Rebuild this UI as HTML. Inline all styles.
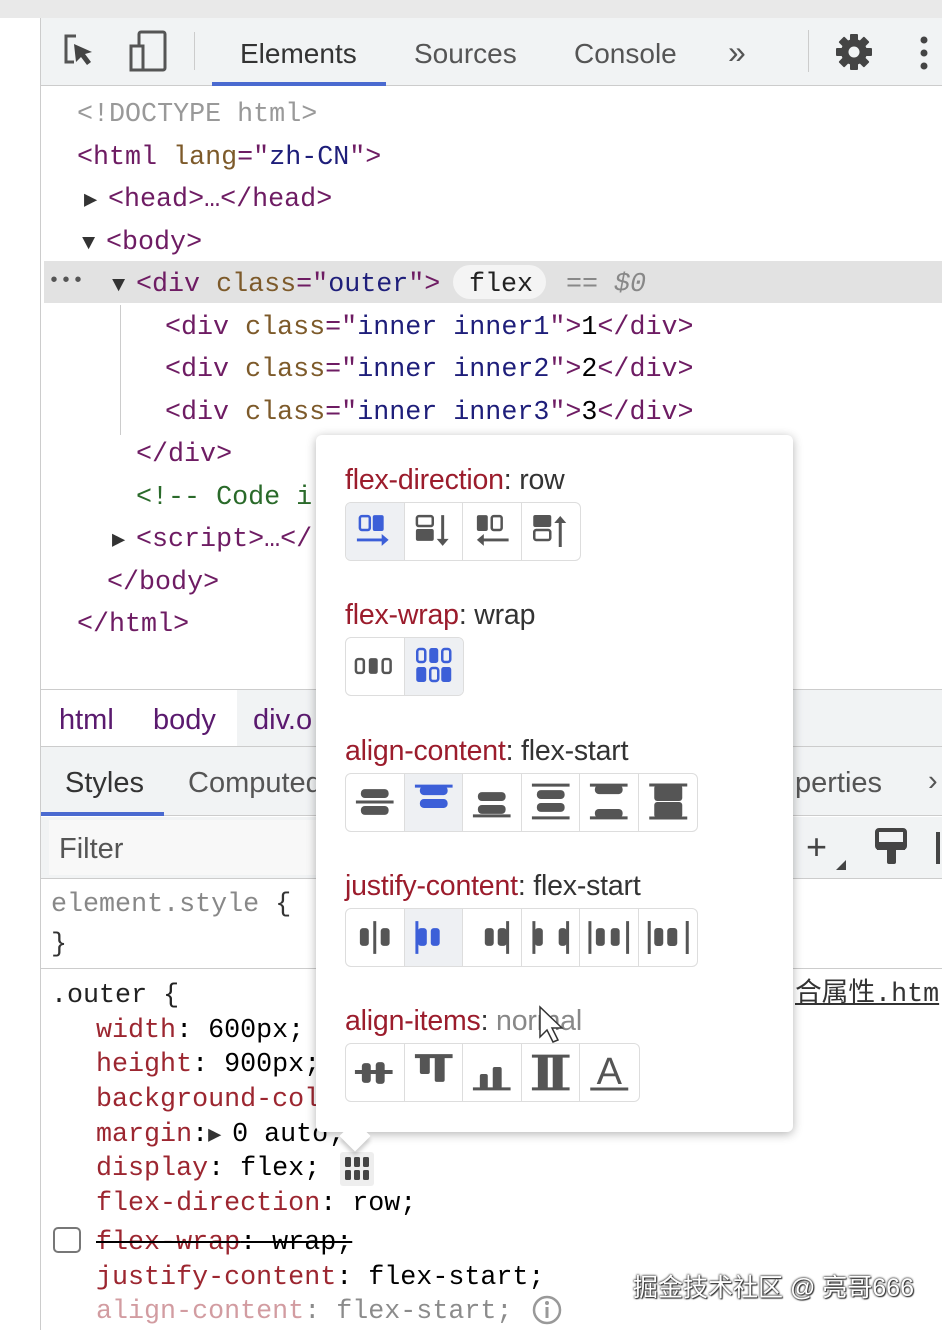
<!DOCTYPE html>
<html><head><meta charset="utf-8"><style>
*{margin:0;padding:0;box-sizing:border-box}
body{width:942px;height:1330px;position:relative;background:#fff;overflow:hidden;font-family:"Liberation Sans",sans-serif}
.a{position:absolute}
.m{font-family:"Liberation Mono","DejaVu Sans Mono",monospace;font-size:26.7px;white-space:pre;line-height:1}
.t{color:#6e1c63}.n{color:#7d5a2a}.v{color:#1e1e7a}
.p{color:#9c2630}
.tr{font-size:22px;color:#333;display:inline-block;width:24px}
.pop{position:absolute;left:316px;top:435px;width:477px;height:697px;background:#fff;border-radius:6px;box-shadow:0 2px 10px rgba(0,0,0,.3)}
.h{position:absolute;left:29px;font-size:28.5px;color:#333;white-space:nowrap;letter-spacing:-.2px}
.h b{font-weight:normal;color:#9b1c2c}
.g{position:absolute;left:29px;display:flex;border:1px solid #ddd;border-radius:6px;overflow:hidden;height:59px}
.g svg{width:58.5px;height:57px;border-right:1px solid #ddd;display:block}
.g svg:last-child{border-right:none}
.g svg.s{background:#eef0f3}
</style></head><body>
<div class="a" style="left:0;top:0;width:942px;height:18px;background:#e9e9e9"></div>
<div class="a" style="left:40px;top:18px;width:1px;height:1312px;background:#ccc"></div>
<!-- toolbar -->
<div class="a" style="left:41px;top:18px;width:901px;height:68px;background:#f1f3f4;border-bottom:1px solid #ccc"></div>
<svg class="a" style="left:62px;top:34px" width="40" height="36" viewBox="0 0 40 36"><path d="M14 2H4v26h8" fill="none" stroke="#555" stroke-width="3"/><path d="M12 10l18 8-7 2 6 8-4 3-6-8-5 5z" fill="#444"/></svg>
<svg class="a" style="left:128px;top:30px" width="40" height="42" viewBox="0 0 40 42"><rect x="11" y="2" width="26" height="38" rx="2" fill="none" stroke="#555" stroke-width="3"/><rect x="3" y="16" width="12" height="24" fill="#f1f3f4" stroke="#555" stroke-width="3"/></svg>
<div class="a" style="left:194px;top:32px;width:1px;height:38px;background:#ccc"></div>
<div class="a" style="left:240px;top:38px;font-size:28px;color:#333">Elements</div>
<div class="a" style="left:212px;top:82px;width:174px;height:4px;background:#4a6ad0"></div>
<div class="a" style="left:414px;top:38px;font-size:28px;color:#555">Sources</div>
<div class="a" style="left:574px;top:38px;font-size:28px;color:#555">Console</div>
<div class="a" style="left:728px;top:34px;font-size:32px;color:#555">»</div>
<div class="a" style="left:808px;top:30px;width:1px;height:42px;background:#ccc"></div>
<svg class="a" style="left:835px;top:33px" width="38" height="38" viewBox="0 0 38 38"><g fill="#444"><circle cx="19" cy="19" r="13"/><g id="k"><rect x="15" y="1" width="8" height="36" rx="1"/></g><rect x="15" y="1" width="8" height="36" rx="1" transform="rotate(45 19 19)"/><rect x="15" y="1" width="8" height="36" rx="1" transform="rotate(90 19 19)"/><rect x="15" y="1" width="8" height="36" rx="1" transform="rotate(135 19 19)"/></g><circle cx="19" cy="19" r="5.5" fill="#f1f3f4"/></svg>
<svg class="a" style="left:918px;top:36px" width="12" height="34"><circle cx="6" cy="4" r="3.5" fill="#444"/><circle cx="6" cy="17" r="3.5" fill="#444"/><circle cx="6" cy="30" r="3.5" fill="#444"/></svg>
<!-- DOM tree -->
<div class="a" style="left:44px;top:261px;width:898px;height:42px;background:#e2e2e2"></div>
<div class="a" style="left:120px;top:305px;width:1px;height:130px;background:#ccc"></div>
<div class="a m" style="left:77px;top:102px;color:#999">&lt;!DOCTYPE html&gt;</div>
<div class="a m" style="left:77px;top:145px"><span class="t">&lt;html </span><span class="n">lang</span><span class="t">="</span><span class="v">zh-CN</span><span class="t">"&gt;</span></div>
<div class="a m" style="left:84px;top:187px"><span class="tr">▶</span><span class="t">&lt;head&gt;…&lt;/head&gt;</span></div>
<div class="a m" style="left:82px;top:230px"><span class="tr">▼</span><span class="t">&lt;body&gt;</span></div>
<div class="a m" style="left:48px;top:272px;color:#555;font-size:20px">•••</div>
<div class="a m" style="left:112px;top:272px"><span class="tr">▼</span><span class="t">&lt;div </span><span class="n">class</span><span class="t">="</span><span class="v">outer</span><span class="t">"&gt;</span></div>
<div class="a" style="left:453px;top:265px;width:93px;height:34px;border-radius:17px;background:#f4f4f4"></div>
<div class="a m" style="left:469px;top:272px;color:#222">flex</div>
<div class="a m" style="left:566px;top:272px;color:#888">== <i>$0</i></div>
<div class="a m" style="left:165px;top:315px"><span class="t">&lt;div </span><span class="n">class</span><span class="t">="</span><span class="v">inner inner1</span><span class="t">"&gt;</span>1<span class="t">&lt;/div&gt;</span></div>
<div class="a m" style="left:165px;top:357px"><span class="t">&lt;div </span><span class="n">class</span><span class="t">="</span><span class="v">inner inner2</span><span class="t">"&gt;</span>2<span class="t">&lt;/div&gt;</span></div>
<div class="a m" style="left:165px;top:400px"><span class="t">&lt;div </span><span class="n">class</span><span class="t">="</span><span class="v">inner inner3</span><span class="t">"&gt;</span>3<span class="t">&lt;/div&gt;</span></div>
<div class="a m t" style="left:136px;top:442px">&lt;/div&gt;</div>
<div class="a m" style="left:136px;top:485px;color:#2a6a2a">&lt;!-- Code i</div>
<div class="a m" style="left:112px;top:527px"><span class="tr">▶</span><span class="t">&lt;script&gt;…&lt;/</span></div>
<div class="a m t" style="left:107px;top:570px">&lt;/body&gt;</div>
<div class="a m t" style="left:77px;top:612px">&lt;/html&gt;</div>
<!-- breadcrumb -->
<div class="a" style="left:41px;top:689px;width:901px;height:1px;background:#ccc"></div>
<div class="a" style="left:237px;top:690px;width:705px;height:56px;background:#f1f3f4"></div>
<div class="a" style="left:59px;top:704px;font-size:29px;color:#5a1a6e">html</div>
<div class="a" style="left:153px;top:704px;font-size:29px;color:#5a1a6e">body</div>
<div class="a" style="left:253px;top:704px;font-size:29px;color:#5a1a6e">div.o</div>
<!-- styles tabs -->
<div class="a" style="left:41px;top:746px;width:901px;height:70px;background:#f1f3f4;border-top:1px solid #ccc;border-bottom:1px solid #ccc"></div>
<div class="a" style="left:65px;top:767px;font-size:29px;color:#333">Styles</div>
<div class="a" style="left:41px;top:812px;width:123px;height:4px;background:#4a6ad0"></div>
<div class="a" style="left:188px;top:767px;font-size:29px;color:#555">Computed</div>
<div class="a" style="left:795px;top:767px;font-size:29px;color:#555">perties</div>
<div class="a" style="left:928px;top:765px;font-size:29px;color:#555">›</div>
<div class="a" style="left:41px;top:817px;width:901px;height:62px;background:#f1f3f4;border-bottom:1px solid #ccc"></div>
<div class="a" style="left:49px;top:820px;width:270px;height:55px;background:#f8f8f8"></div>
<div class="a" style="left:59px;top:833px;font-size:29px;color:#555">Filter</div>
<div class="a" style="left:806px;top:826px;font-size:36px;color:#444">+</div>
<div class="a" style="left:836px;top:860px;width:0;height:0;border-left:10px solid transparent;border-bottom:10px solid #444"></div>
<svg class="a" style="left:874px;top:828px" width="34" height="38" viewBox="0 0 34 38"><rect x="3" y="2" width="28" height="18" rx="2" fill="none" stroke="#444" stroke-width="4"/><rect x="3" y="14" width="28" height="8" fill="#444"/><rect x="13" y="20" width="9" height="16" rx="2" fill="#444"/></svg>
<div class="a" style="left:936px;top:832px;width:4px;height:32px;background:#444"></div>
<!-- element.style -->
<div class="a m" style="left:51px;top:892px;color:#888">element.style <span style="color:#333">{</span></div>
<div class="a m" style="left:51px;top:932px;color:#333">}</div>
<div class="a" style="left:41px;top:968px;width:901px;height:1px;background:#ccc"></div>
<div class="a m" style="left:795px;top:982px;color:#333;text-decoration:underline;font-family:'Liberation Mono','Noto Sans CJK SC',monospace">合属性.htm</div>
<div class="a m" style="left:51px;top:983px;color:#222">.outer {</div>
<div class="a m" style="left:96px;top:1018px"><span class="p">width</span>: 600px;</div>
<div class="a m" style="left:96px;top:1052px"><span class="p">height</span>: 900px;</div>
<div class="a m" style="left:96px;top:1087px"><span class="p">background-col</span></div>
<div class="a m" style="left:96px;top:1122px"><span class="p">margin</span>:<span class="tr">▶</span>0 auto;</div>
<div class="a m" style="left:96px;top:1156px"><span class="p">display</span>: flex;</div>
<div class="a" style="left:340px;top:1152px;width:34px;height:34px;background:#eee;border-radius:3px"></div>
<svg class="a" style="left:344px;top:1156px" width="26" height="26" viewBox="0 0 26 26" fill="#444"><rect x="1" y="1" width="6" height="10" rx="1.5"/><rect x="10" y="1" width="6" height="10" rx="1.5"/><rect x="19" y="1" width="6" height="10" rx="1.5"/><rect x="1" y="14" width="6" height="10" rx="1.5"/><rect x="10" y="14" width="6" height="10" rx="1.5"/><rect x="19" y="14" width="6" height="10" rx="1.5"/></svg>
<div class="a m" style="left:96px;top:1191px"><span class="p">flex-direction</span>: row;</div>
<div class="a" style="left:53px;top:1227px;width:28px;height:26px;border:2px solid #777;border-radius:5px"></div>
<div class="a m" style="left:96px;top:1230px;text-decoration:line-through"><span class="p">flex-wrap</span>: wrap;</div>
<div class="a m" style="left:96px;top:1265px"><span class="p">justify-content</span>: flex-start;</div>
<div class="a m" style="left:96px;top:1299px;opacity:.45"><span class="p">align-content</span>: flex-start;</div>
<svg class="a" style="left:531px;top:1294px" width="32" height="32"><circle cx="16" cy="16" r="13" fill="none" stroke="#999" stroke-width="2.5"/><rect x="14.5" y="13" width="3" height="11" fill="#999"/><circle cx="16" cy="9" r="2" fill="#999"/></svg>
<div class="a" style="left:633px;top:1268px;font-size:25px;color:#fff;font-family:'Liberation Sans','Noto Sans CJK SC',sans-serif;text-shadow:0 0 2px #333,0 0 2px #333,1px 1px 1px #333">掘金技术社区 @ 亮哥666</div>
<!-- popup -->
<div class="pop">
<div class="a" style="left:28px;top:690px;width:22px;height:22px;background:#fff;transform:rotate(45deg);box-shadow:3px 3px 4px rgba(0,0,0,.2)"></div>
<div class="a" style="left:20px;top:670px;width:50px;height:27px;background:#fff"></div>
<div class="h" style="top:29px"><b>flex-direction</b>: row</div>
<div class="g" style="top:67px">
<svg class="s" viewBox="0 0 58 57"><rect x="14" y="13" width="10" height="14" rx="2" fill="none" stroke="#3c5fd8" stroke-width="2.5"/><rect x="27" y="12" width="11" height="16" rx="2" fill="#3c5fd8"/><path d="M11 37h30" stroke="#3c5fd8" stroke-width="3"/><path d="M36 31l7 6-7 6z" fill="#3c5fd8"/></svg>
<svg viewBox="0 0 58 57"><rect x="12" y="13" width="16" height="10" rx="2" fill="none" stroke="#555" stroke-width="2.5"/><rect x="11" y="26" width="18" height="12" rx="2" fill="#555"/><path d="M38 12v28" stroke="#555" stroke-width="3"/><path d="M32 36l6 7 6-7z" fill="#555"/></svg>
<svg viewBox="0 0 58 57"><rect x="14" y="12" width="11" height="16" rx="2" fill="#555"/><rect x="29" y="13" width="10" height="14" rx="2" fill="none" stroke="#555" stroke-width="2.5"/><path d="M16 37h30" stroke="#555" stroke-width="3"/><path d="M21 31l-7 6 7 6z" fill="#555"/></svg>
<svg viewBox="0 0 58 57"><rect x="11" y="12" width="18" height="12" rx="2" fill="#555"/><rect x="12" y="27" width="16" height="10" rx="2" fill="none" stroke="#555" stroke-width="2.5"/><path d="M38 44V16" stroke="#555" stroke-width="3"/><path d="M32 20l6-7 6 7z" fill="#555"/></svg>
</div>
<div class="h" style="top:164px"><b>flex-wrap</b>: wrap</div>
<div class="g" style="top:202px">
<svg viewBox="0 0 58 57"><rect x="10" y="21" width="8" height="14" rx="2.5" fill="none" stroke="#555" stroke-width="2.5"/><rect x="23" y="20" width="9" height="16" rx="2.5" fill="#555"/><rect x="37" y="21" width="8" height="14" rx="2.5" fill="none" stroke="#555" stroke-width="2.5"/></svg>
<svg class="s" viewBox="0 0 58 57"><rect x="12" y="11" width="8" height="13" rx="2.5" fill="none" stroke="#3c5fd8" stroke-width="2.5"/><rect x="24" y="10" width="9" height="15" rx="2.5" fill="#3c5fd8"/><rect x="37" y="11" width="8" height="13" rx="2.5" fill="none" stroke="#3c5fd8" stroke-width="2.5"/><rect x="11" y="29" width="10" height="15" rx="2.5" fill="#3c5fd8"/><rect x="25" y="30" width="8" height="13" rx="2.5" fill="none" stroke="#3c5fd8" stroke-width="2.5"/><rect x="36" y="29" width="10" height="15" rx="2.5" fill="#3c5fd8"/></svg>
</div>
<div class="h" style="top:300px"><b>align-content</b>: flex-start</div>
<div class="g" style="top:338px">
<svg viewBox="0 0 58 57"><rect x="15" y="15" width="28" height="9" rx="4" fill="#555"/><path d="M10 28h38" stroke="#555" stroke-width="3"/><rect x="15" y="32" width="28" height="9" rx="4" fill="#555"/></svg>
<svg class="s" viewBox="0 0 58 57"><path d="M10 12h38" stroke="#3c5fd8" stroke-width="3"/><rect x="15" y="12" width="28" height="9" rx="4" fill="#3c5fd8"/><rect x="15" y="25" width="28" height="9" rx="4" fill="#3c5fd8"/></svg>
<svg viewBox="0 0 58 57"><rect x="15" y="18" width="28" height="9" rx="4" fill="#555"/><rect x="15" y="31" width="28" height="9" rx="4" fill="#555"/><path d="M10 42h38" stroke="#555" stroke-width="3"/></svg>
<svg viewBox="0 0 58 57"><path d="M10 11h38M10 44h38" stroke="#555" stroke-width="3"/><rect x="15" y="16" width="28" height="9" rx="4" fill="#555"/><rect x="15" y="29" width="28" height="9" rx="4" fill="#555"/></svg>
<svg viewBox="0 0 58 57"><path d="M10 11h38M10 44h38" stroke="#555" stroke-width="3"/><rect x="15" y="11" width="28" height="9" rx="4" fill="#555"/><rect x="15" y="35" width="28" height="9" rx="4" fill="#555"/></svg>
<svg viewBox="0 0 58 57"><path d="M10 11h38M10 44h38" stroke="#555" stroke-width="3"/><rect x="15" y="11" width="28" height="16" rx="3" fill="#555"/><rect x="15" y="28" width="28" height="16" rx="3" fill="#555"/></svg>
</div>
<div class="h" style="top:435px"><b>justify-content</b>: flex-start</div>
<div class="g" style="top:473px">
<svg viewBox="0 0 58 57"><rect x="14" y="19" width="9" height="18" rx="3" fill="#555"/><path d="M29 12v33" stroke="#555" stroke-width="3"/><rect x="35" y="19" width="9" height="18" rx="3" fill="#555"/></svg>
<svg class="s" viewBox="0 0 58 57"><path d="M12 12v33" stroke="#3c5fd8" stroke-width="3"/><rect x="13" y="19" width="9" height="18" rx="3" fill="#3c5fd8"/><rect x="26" y="19" width="9" height="18" rx="3" fill="#3c5fd8"/></svg>
<svg viewBox="0 0 58 57"><rect x="22" y="19" width="9" height="18" rx="3" fill="#555"/><rect x="35" y="19" width="9" height="18" rx="3" fill="#555"/><path d="M45 12v33" stroke="#555" stroke-width="3"/></svg>
<svg viewBox="0 0 58 57"><path d="M12 12v33M46 12v33" stroke="#555" stroke-width="3"/><rect x="13" y="19" width="8" height="18" rx="3" fill="#555"/><rect x="37" y="19" width="8" height="18" rx="3" fill="#555"/></svg>
<svg viewBox="0 0 58 57"><path d="M10 12v33M48 12v33" stroke="#555" stroke-width="3"/><rect x="16" y="19" width="9" height="18" rx="3" fill="#555"/><rect x="31" y="19" width="9" height="18" rx="3" fill="#555"/></svg>
<svg viewBox="0 0 58 57"><path d="M10 12v33M48 12v33" stroke="#555" stroke-width="3"/><rect x="15" y="19" width="9" height="18" rx="3" fill="#555"/><rect x="28" y="19" width="10" height="18" rx="3" fill="#555"/></svg>
</div>
<div class="h" style="top:570px"><b>align-items</b>: <span style="color:#888">normal</span></div>
<div class="g" style="top:608px">
<svg viewBox="0 0 58 57"><path d="M9 28h38" stroke="#555" stroke-width="4"/><rect x="16" y="19" width="9" height="20" rx="3" fill="#555"/><rect x="30" y="18" width="9" height="22" rx="3" fill="#555"/></svg>
<svg viewBox="0 0 58 57"><path d="M10 12h38" stroke="#555" stroke-width="4"/><rect x="15" y="12" width="10" height="18" rx="2" fill="#555"/><rect x="30" y="12" width="10" height="26" rx="2" fill="#555"/></svg>
<svg viewBox="0 0 58 57"><path d="M10 45h38" stroke="#555" stroke-width="3"/><rect x="17" y="30" width="8" height="15" rx="2" fill="#555"/><rect x="30" y="23" width="9" height="22" rx="2" fill="#555"/></svg>
<svg viewBox="0 0 58 57"><path d="M10 12h38M10 45h38" stroke="#555" stroke-width="3"/><rect x="16" y="12" width="10" height="33" fill="#555"/><rect x="31" y="12" width="10" height="33" fill="#555"/></svg>
<svg viewBox="0 0 58 57"><text x="29" y="40" text-anchor="middle" font-family="Liberation Sans" font-size="38" fill="#555">A</text><path d="M10 45h38" stroke="#555" stroke-width="3"/></svg>
</div>
<svg class="a" style="left:222px;top:570px" width="26" height="40" viewBox="0 0 26 40"><path d="M2 2v30l7-7 6 12 5-2-6-12h10z" fill="#fff" stroke="#333" stroke-width="1.5"/></svg>
</div>
</body></html>
